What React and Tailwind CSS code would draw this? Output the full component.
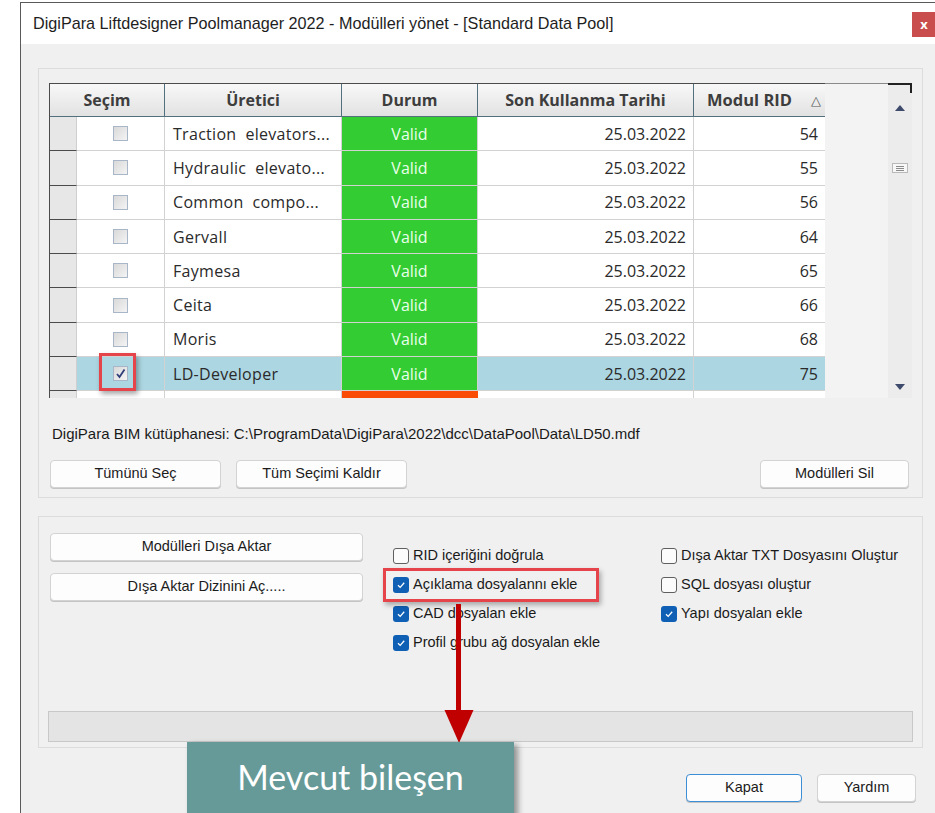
import React from 'react';

const rows = [
  { name: 'Traction  elevators...', rid: 54 },
  { name: 'Hydraulic  elevato...', rid: 55 },
  { name: 'Common  compo...', rid: 56 },
  { name: 'Gervall', rid: 64 },
  { name: 'Faymesa', rid: 65 },
  { name: 'Ceita', rid: 66 },
  { name: 'Moris', rid: 68 },
  { name: 'LD-Developer', rid: 75, sel: true },
];

const cols = 'grid grid-cols-[27px_88px_177px_136px_216px_132px]';

function GridCheck({ on }) {
  return (
    <div className="w-[15px] h-[15px] border border-[#a9b6c8] bg-gradient-to-br from-[#d9d9d9] to-[#f4f4f4] flex items-center justify-center">
      {on && (
        <svg width="11" height="11" viewBox="0 0 11 11">
          <path d="M2 6 L4.5 9 L9.5 1.5" fill="none" stroke="#2f3d78" strokeWidth="1.8" />
        </svg>
      )}
    </div>
  );
}

function Check({ on, label }) {
  return (
    <div className="flex items-center gap-[4px] h-[24px]">
      {on ? (
        <div className="w-[16px] h-[16px] rounded-[3px] bg-[#0f5fb5] flex items-center justify-center">
          <svg width="10" height="10" viewBox="0 0 10 10">
            <path d="M2 5.2 L4.2 7.4 L8.2 2.8" fill="none" stroke="#ffffff" strokeWidth="1.3" />
          </svg>
        </div>
      ) : (
        <div className="w-[16px] h-[16px] rounded-[3px] border border-[#5f5f5f] bg-[#fbfbfb]" />
      )}
      <span className="text-[14.5px] text-[#1a1a1a] font-['Liberation_Sans',sans-serif]">{label}</span>
    </div>
  );
}

function Btn({ children, w, primary }) {
  return (
    <button
      className={`h-[28px] ${w} rounded-[4px] bg-[#fdfdfd] text-[14.5px] text-[#1b1b1b] font-['Liberation_Sans',sans-serif] shadow-[0_1px_0_#c4c4c4] border ${
        primary ? 'border-[#3c8fd6]' : 'border-[#d3d3d3]'
      }`}
    >
      {children}
    </button>
  );
}

export default function App() {
  return (
    <div className="relative min-h-screen w-[935px] h-[813px] overflow-hidden bg-white font-['Noto_Sans','Open_Sans',sans-serif]">
      {/* dialog window */}
      <div className="ml-[20px] mt-[2px] w-[930px] h-[811px] border-l border-t border-[#5a5a5a] bg-[#f0f0f0] flex flex-col">
        <div className="h-[41px] bg-white flex items-start justify-between">
          <span className="mt-[8px] ml-[12px] text-[16.2px] text-[#1e1e1e] font-['Liberation_Sans','Noto_Sans',sans-serif]">
            DigiPara Liftdesigner Poolmanager 2022 - Modülleri yönet - [Standard Data Pool]
          </span>
          <div className="mt-[9px] mr-[14px] w-[24px] h-[25px] bg-[#c94d4c] text-white text-[13px] font-bold flex items-center justify-center">
            x
          </div>
        </div>

        {/* modules group */}
        <div className="ml-[17px] mt-[24px] w-[885px] h-[430px] border border-[#dcdcdc] flex flex-col px-[10px] pt-[14px]">
          <div className="flex h-[315px]">
            <div className="w-[776px] h-[315px] overflow-hidden bg-white border-l border-[#4b4b4b]">
              <div className={`${cols} h-[34px] border-t border-[#4b4b4b]`}>
                {['Seçim', 'Üretici', 'Durum', 'Son Kullanma Tarihi'].map((h, i) => (
                  <div
                    key={h}
                    className={`${i === 0 ? 'col-span-2' : ''} flex items-center justify-center border-r border-b border-[#52707d] bg-gradient-to-b from-[#f8f8f8] to-[#e2e2e2] text-[16px] font-bold text-[#3d3d3d] font-['Open_Sans',sans-serif]`}
                  >
                    {h}
                  </div>
                ))}
                <div className="relative flex items-center justify-center border-r border-b border-[#52707d] bg-gradient-to-b from-[#f8f8f8] to-[#e2e2e2] text-[16.5px] font-bold text-[#3d3d3d] font-['Open_Sans',sans-serif]">
                  <span className="mr-[20px]">Modul RID</span>
                  <span className="absolute right-[4px] top-[7px] text-[13px] font-normal text-[#555]">△</span>
                </div>
              </div>
              {rows.map((r) => {
                const bg = r.sel ? 'bg-[#acd6e2]' : 'bg-white';
                return (
                  <div key={r.rid} className={`${cols} h-[34.3px] text-[16px] text-[#2a2a2a] font-['Open_Sans',sans-serif]`}>
                    <div className="bg-[#e7e7e7] border-b border-[#4b4b4b] border-r border-r-[#cfcfcf]" />
                    <div className={`${bg} border-r border-b border-[#d2d2d2] flex items-center justify-center`}>
                      <GridCheck on={r.sel} />
                    </div>
                    <div className={`${bg} border-r border-b border-[#d2d2d2] flex items-center pl-[8px] whitespace-pre tracking-[0.3px]`}>
                      {r.name}
                    </div>
                    <div className="bg-[#33cc33] border-r border-b border-[#d2d2d2] flex items-center justify-center text-[#eaffea]">
                      Valid
                    </div>
                    <div className={`${bg} border-r border-b border-[#d2d2d2] flex items-center justify-end pr-[7px]`}>
                      25.03.2022
                    </div>
                    <div className={`${bg} border-r border-b border-[#d2d2d2] flex items-center justify-end pr-[7px]`}>
                      {r.rid}
                    </div>
                  </div>
                );
              })}
              <div className={`${cols} h-[20px]`}>
                <div className="bg-[#e7e7e7] border-r border-[#cfcfcf]" />
                <div className="border-r border-[#d2d2d2]" />
                <div className="border-r border-[#d2d2d2]" />
                <div className="bg-[#fb4c07]" />
                <div className="border-r border-[#d2d2d2]" />
                <div className="border-r border-[#d2d2d2]" />
              </div>
            </div>
            <div className="w-[63px] bg-[#f3f3f3] border-t border-[#8a8a8a]" />
            {/* vertical scroll bar */}
            <div className="relative w-[24px] bg-[#ececec] border-t-2 border-[#222] flex flex-col items-center justify-between pt-[20px] pb-[8px]">
              <div className="absolute right-0 top-0 w-[2px] h-[8px] bg-[#222]" />
              <svg width="10" height="6" viewBox="0 0 10 6">
                <path d="M0 6 L5 0 L10 6 Z" fill="#3d4a6b" />
              </svg>
              <div className="mb-auto mt-[52px] w-[16px] h-[10px] border border-[#b9b9b9] bg-[#f7f7f7] flex flex-col justify-center gap-[1px] px-[3px]">
                <div className="h-px bg-[#8a8a8a]" />
                <div className="h-px bg-[#8a8a8a]" />
                <div className="h-px bg-[#8a8a8a]" />
              </div>
              <svg width="10" height="6" viewBox="0 0 10 6">
                <path d="M0 0 L5 6 L10 0 Z" fill="#3d4a6b" />
              </svg>
            </div>
          </div>

          <div className="mt-[25px] ml-[3px] text-[15px] text-[#1a1a1a] font-['Liberation_Sans',sans-serif]">
            DigiPara BIM kütüphanesi: C:\ProgramData\DigiPara\2022\dcc\DataPool\Data\LD50.mdf
          </div>

          <div className="mt-[14px] flex items-center gap-[15px] pl-[1px] pr-[3px]">
            <Btn w="w-[171px]">Tümünü Seç</Btn>
            <Btn w="w-[171px]">Tüm Seçimi Kaldır</Btn>
            <div className="flex-1" />
            <Btn w="w-[149px]">Modülleri Sil</Btn>
          </div>
        </div>

        {/* export group */}
        <div className="ml-[17px] mt-[18px] w-[885px] h-[232px] border border-[#dcdcdc] flex flex-col px-[9px] pt-[16px] pb-[5px]">
          <div className="flex">
            <div className="flex flex-col gap-[12px] pl-[2px]">
              <Btn w="w-[313px]">Modülleri Dışa Aktar</Btn>
              <Btn w="w-[313px]">Dışa Aktar Dizinini Aç.....</Btn>
            </div>
            <div className="ml-[30px] mt-[11px] flex flex-col gap-[5px] w-[268px]">
              <Check label="RID içeriğini doğrula" />
              <Check on label="Açıklama dosyalannı ekle" />
              <Check on label="CAD dosyalan ekle" />
              <Check on label="Profil grubu ağ dosyalan ekle" />
            </div>
            <div className="mt-[11px] flex flex-col gap-[5px]">
              <Check label="Dışa Aktar TXT Dosyasını Oluştur" />
              <Check label="SQL dosyası oluştur" />
              <Check on label="Yapı dosyalan ekle" />
            </div>
          </div>
          <div className="mt-auto h-[31px] border border-[#c8c8c8] bg-[#e4e4e4]" />
        </div>

        <div className="mt-[26px] flex justify-end gap-[15px] pr-[34px]">
          <Btn w="w-[116px]" primary>Kapat</Btn>
          <Btn w="w-[99px]">Yardım</Btn>
        </div>
      </div>

      {/* callouts */}
      <div className="absolute left-[99px] top-[353px] w-[37px] h-[38px] border-[3px] border-[#e5454a] shadow-[2px_3px_5px_rgba(0,0,0,0.35)]" />
      <div className="absolute left-[383px] top-[568px] w-[216px] h-[34px] border-[3px] border-[#e5454a] shadow-[2px_3px_5px_rgba(0,0,0,0.3)]" />
      <svg className="absolute left-[444px] top-[604px]" width="30" height="140" viewBox="0 0 30 140">
        <rect x="12" y="0" width="5" height="110" fill="#c00000" />
        <path d="M0.5 106 L29.5 106 L15 139 Z" fill="#c00000" />
      </svg>
      <div className="absolute left-[187px] top-[742px] w-[327px] h-[80px] bg-[#669a98] shadow-[4px_3px_6px_rgba(0,0,0,0.4)] flex justify-center pt-[15px]">
        <span className="text-[34px] leading-[40px] text-white font-['Lato',sans-serif]">Mevcut bileşen</span>
      </div>
    </div>
  );
}
